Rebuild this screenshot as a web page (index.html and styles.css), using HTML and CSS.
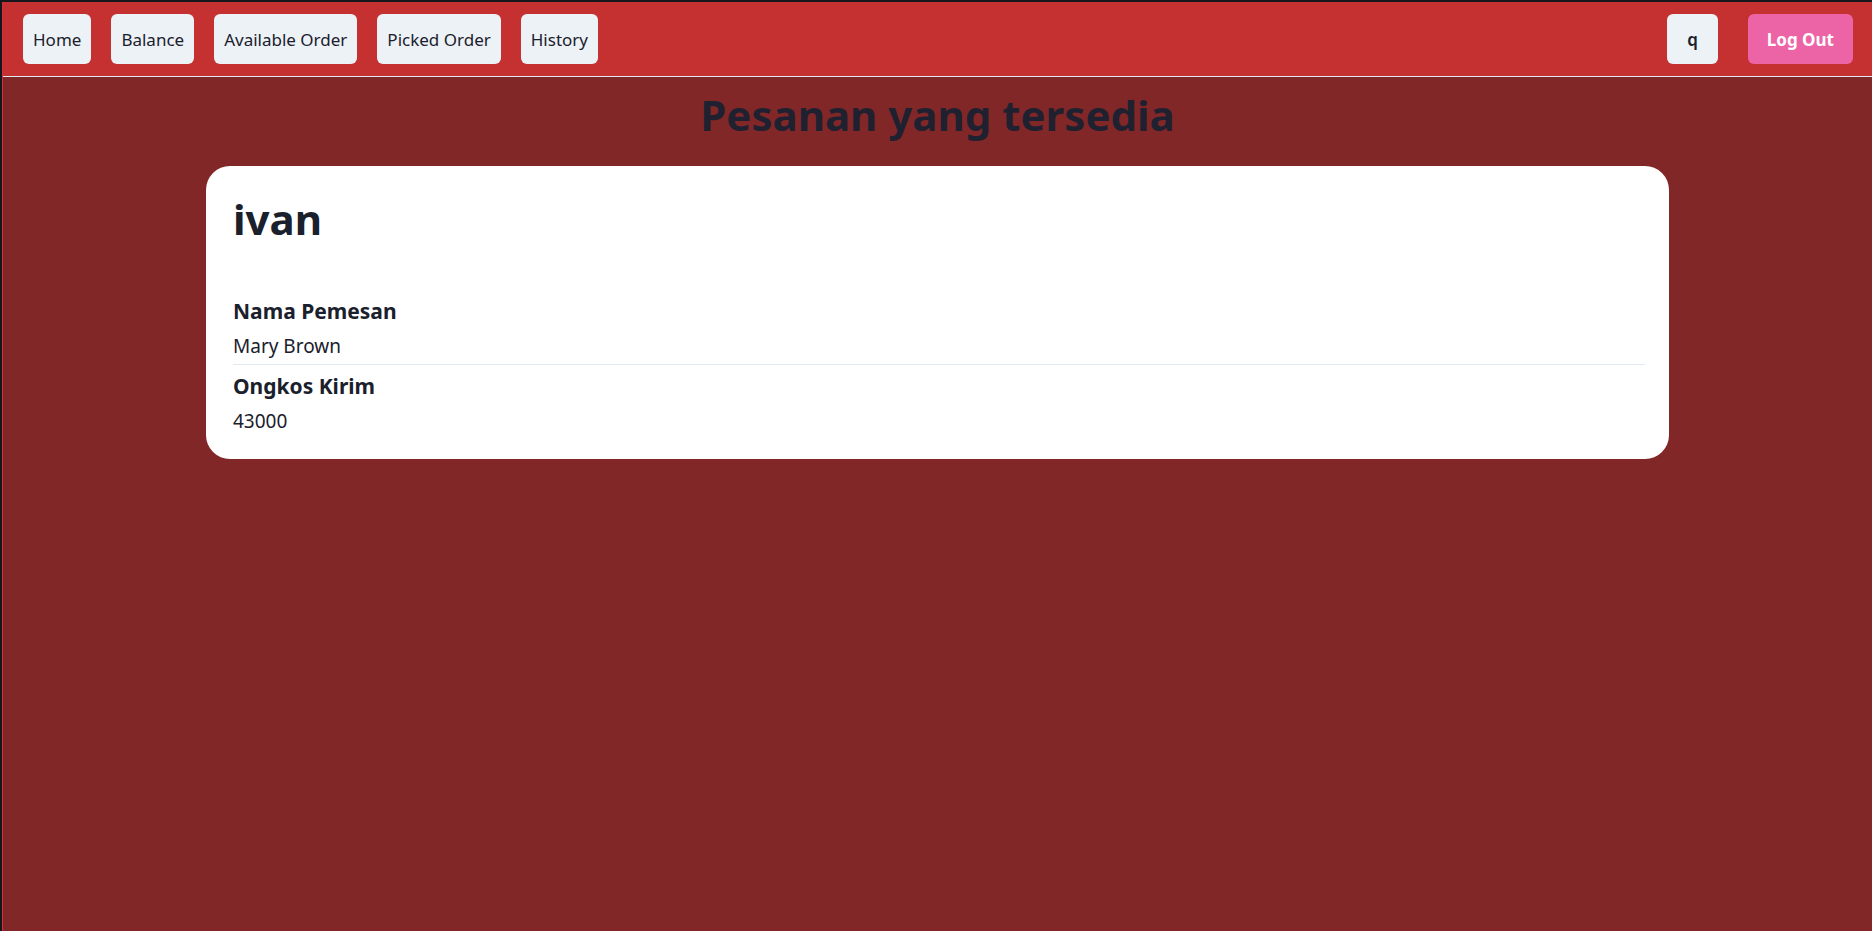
FILE: index.html
```html
<!DOCTYPE html>
<html lang="id">
<head>
<meta charset="utf-8">
<title>Pesanan yang tersedia</title>
<link rel="stylesheet" href="styles.css">
</head>
<body>
<div class="frame">
  <nav class="navbar">
    <div class="nav-left">
      <a class="nav-btn" href="#">Home</a>
      <a class="nav-btn" href="#">Balance</a>
      <a class="nav-btn" href="#">Available Order</a>
      <a class="nav-btn" href="#">Picked Order</a>
      <a class="nav-btn" href="#">History</a>
    </div>
    <div class="nav-right">
      <a class="nav-btn user-btn" href="#">q</a>
      <a class="nav-btn logout-btn" href="#">Log Out</a>
    </div>
  </nav>
  <main class="content">
    <h1 class="page-title">Pesanan yang tersedia</h1>
    <section class="card">
      <h2 class="card-title">ivan</h2>
      <dl class="details">
        <div class="detail-row">
          <dt class="detail-label">Nama Pemesan</dt>
          <dd class="detail-value">Mary Brown</dd>
        </div>
        <div class="detail-row">
          <dt class="detail-label">Ongkos Kirim</dt>
          <dd class="detail-value">43000</dd>
        </div>
      </dl>
    </section>
  </main>
</div>
</body>
</html>
```

FILE: styles.css
```css
* { box-sizing: border-box; }
html, body { margin: 0; padding: 0; height: 100%; }
body {
  background: #16161d;
  font-family: "Noto Sans", "Open Sans", sans-serif;
  color: #1a202c;
}
.frame {
  margin-top: 2px;
  margin-left: 2px;
  min-height: calc(100% - 2px);
  background: #822727;
  border-left: 1px solid #d3303c;
}
.navbar {
  display: flex;
  justify-content: space-between;
  align-items: center;
  height: 75px;
  padding: 0 19px 0 20px;
  background: #c53030;
  border-bottom: 1px solid #e2e8f0;
}
.nav-left, .nav-right { display: flex; align-items: center; }
.nav-left { gap: 20px; }
.nav-right { gap: 30px; }
.nav-btn {
  display: flex;
  align-items: center;
  height: 50px;
  padding: 0 10px;
  background: #edf2f7;
  color: #1a202c;
  border-radius: 6px;
  font-size: 17px;
  text-decoration: none;
}
.user-btn { padding: 0 20px; font-weight: 600; }
.logout-btn {
  background: #ed64a6;
  color: #ffffff;
  font-weight: 700;
  padding: 0 19px;
}
.content {
  display: flex;
  flex-direction: column;
  align-items: center;
}
.page-title {
  margin: 10px 0 23px;
  font-size: 42px;
  line-height: 56px;
  font-weight: 700;
  color: #1f2130;
}
.card {
  width: 1463px;
  background: #ffffff;
  border-radius: 24px;
  padding: 25px 24px 24px 27px;
}
.card-title {
  margin: 0 0 48px;
  font-size: 42px;
  line-height: 56px;
  font-weight: 700;
  color: #1a202c;
}
.details { margin: 0; }
.detail-row:first-child { padding-bottom: 4px; }
.detail-row + .detail-row {
  border-top: 1px solid #e2e8f0;
  padding-top: 5px;
}
.detail-label {
  font-size: 21px;
  font-weight: 700;
  line-height: 32px;
}
.detail-value {
  margin: 5px 0 0;
  font-size: 19px;
  line-height: 28px;
  color: #1a202c;
}
```
